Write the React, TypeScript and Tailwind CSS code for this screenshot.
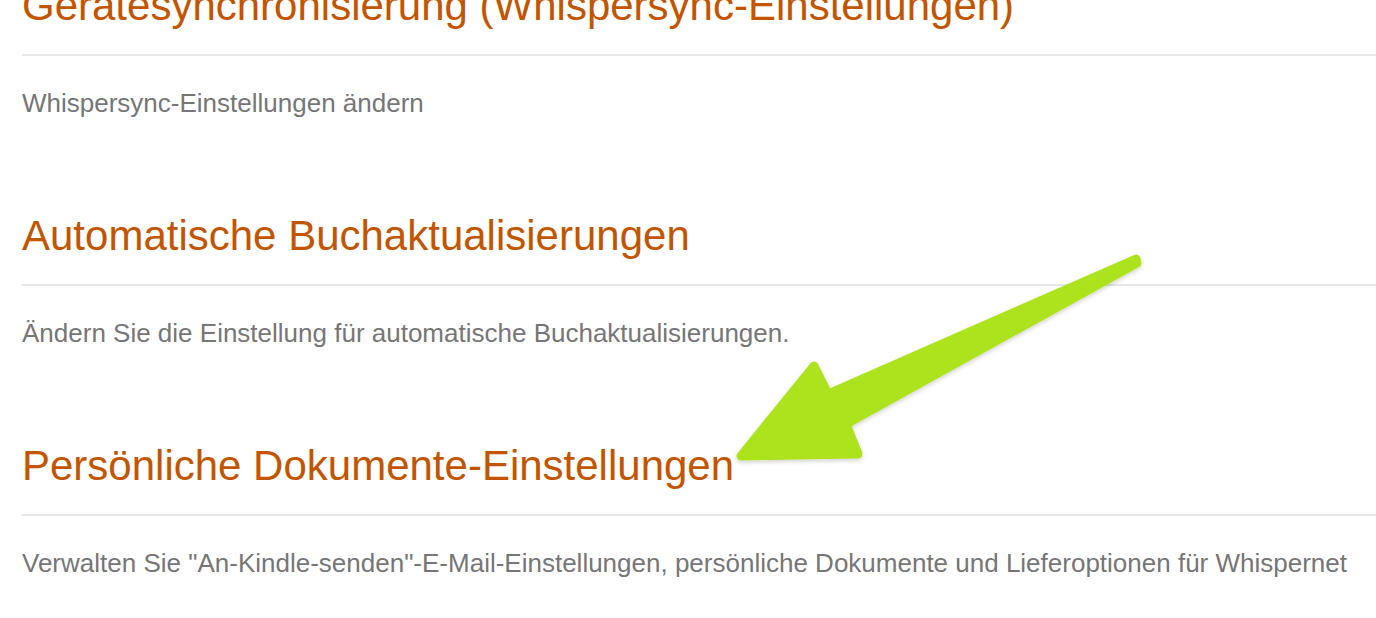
import React from "react";

interface Section {
  title: string;
  text: string;
}

const sections: Section[] = [
  {
    title: "Gerätesynchronisierung (Whispersync-Einstellungen)",
    text: "Whispersync-Einstellungen ändern",
  },
  {
    title: "Automatische Buchaktualisierungen",
    text: "Ändern Sie die Einstellung für automatische Buchaktualisierungen.",
  },
  {
    title: "Persönliche Dokumente-Einstellungen",
    text: 'Verwalten Sie "An-Kindle-senden"-E-Mail-Einstellungen, persönliche Dokumente und Lieferoptionen für Whispernet',
  },
];

function SettingsSection({ section }: { section: Section }) {
  return (
    <section className="pb-[91px]">
      <h2 className="text-[42px] leading-[52px] text-[#c45500] whitespace-nowrap">
        {section.title}
      </h2>
      <div className="mt-[22px] h-[2px] bg-[#e7e7e7]" />
      <p className="mt-[31px] text-[26px] leading-[32px] text-[#767676] whitespace-nowrap">
        {section.text}
      </p>
    </section>
  );
}

export default function App() {
  return (
    <div
      className="relative w-[1376px] h-[618px] overflow-hidden bg-white"
      style={{ fontFamily: '"Liberation Sans", Arial, sans-serif' }}
    >
      <div className="-mt-[20px] pl-[22px]">
        {sections.map((s) => (
          <SettingsSection key={s.title} section={s} />
        ))}
      </div>

      {/* highlight arrow */}
      <svg
        className="absolute left-0 top-0 pointer-events-none"
        width="1376"
        height="618"
        viewBox="0 0 1376 618"
      >
        <defs>
          <filter id="sh" x="-10%" y="-10%" width="120%" height="130%">
            <feDropShadow dx="0" dy="2" stdDeviation="2" floodColor="#000" floodOpacity="0.18" />
          </filter>
        </defs>
        <polygon
          points="1136,259 828,394 814,366 741,456 858,454 846,424 1137,263"
          fill="#ace31f"
          stroke="#ace31f"
          strokeWidth="9"
          strokeLinejoin="round"
          filter="url(#sh)"
        />
      </svg>
    </div>
  );
}
